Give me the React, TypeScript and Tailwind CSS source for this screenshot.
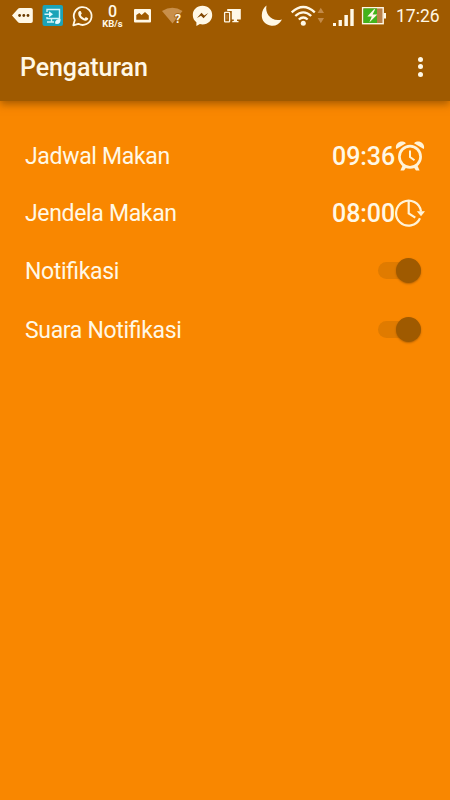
import { useState } from 'react';
import type { ReactNode } from 'react';

// Every notification icon sits in a 30x32 slot
function Slot({ children }: { children: ReactNode }) {
  return (
    <svg width="30" height="32" viewBox="0 0 30 32" fill="none" className="shrink-0">
      {children}
    </svg>
  );
}

function NotificationIcons() {
  return (
    <div className="flex">
      {/* message tag */}
      <Slot>
        <path d="M4 15.5 9.6 9.2Q10.6 8 12 8H23Q24.8 8 24.8 9.8V21.2Q24.8 23 23 23H12Q10.6 23 9.6 21.8Z" fill="#fff8e6" />
        <circle cx="11.6" cy="15.5" r="1.4" fill="#6b3c00" />
        <circle cx="15.8" cy="15.5" r="1.4" fill="#6b3c00" />
        <circle cx="20" cy="15.5" r="1.4" fill="#6b3c00" />
      </Slot>
      {/* screen sharing */}
      <Slot>
        <rect x="4.5" y="5" width="20.5" height="21" rx="2" fill="#1ba3b8" />
        <path d="M9 12V9.5H21.5V18.5H9V17M6.5 14.3H12M9 22H16M13.5 18.5V22" stroke="#d2f3f8" strokeWidth="1.4" />
        <path d="M11 11.3 15 14.3 11 17.3Z" fill="#e6fbff" />
        <path d="M17 23.5Q16.8 19.2 22.5 19Q23 24 18.8 24Z" fill="#e6fbff" />
      </Slot>
      {/* whatsapp */}
      <Slot>
        <path d="M5.3 25.3 6.8 20.1A8.9 8.9 0 1 1 10.4 23.8Z" stroke="#fff8e6" strokeWidth="1.8" strokeLinejoin="round" />
        <path d="M10.3 12.5C10.7 11 12 10.6 12.8 11.2L13.8 13.6 12.8 15C13.6 16.7 14.8 17.8 16.6 18.4L17.8 17.1 20.2 18.3C20.3 20.3 18.5 21 17 20.7 13.2 20 9.6 16 10.3 12.5Z" fill="#fff8e6" />
      </Slot>
      {/* network speed */}
      <div className="flex w-[30px] flex-col items-center pt-[3px] pr-px text-[#fff8e6]">
        <span className="h-[15px] text-[16px] leading-[17px] font-medium">0</span>
        <span className="h-[10px] text-[9.5px] leading-[11px] font-bold">KB/s</span>
      </div>
      {/* gallery */}
      <Slot>
        <rect x="6" y="9" width="17" height="13.5" rx="1" fill="#fff8e6" />
        <path d="M8.3 19.8V15L11.3 13 13.6 15 17 12 20.8 15.5V19.8Z" fill="#9f5a00" />
      </Slot>
      {/* unknown wifi */}
      <Slot>
        <path d="M4 11Q14.5 4.5 24.5 11L14.5 23.5Z" fill="#c88f4a" />
        <text x="16.8" y="22.5" fontSize="12.5" fontWeight="700" fill="#fff8e6" stroke="#9f5a00" strokeWidth="1.6" paintOrder="stroke">?</text>
      </Slot>
      {/* messenger */}
      <Slot>
        <path d="M14.5 5.8C8.8 5.8 4.8 9.8 4.8 15 4.8 18 6.1 20.6 8.4 22.3V26L11.9 24C12.8 24.3 13.6 24.4 14.5 24.4 20.2 24.4 24.2 20.2 24.2 15S20.2 5.8 14.5 5.8Z" fill="#fff8e6" />
        <path d="M9 18 13.5 12.7 16.2 15.4 20.3 13 15.6 18.3 13 15.7Z" fill="#804600" />
      </Slot>
      {/* devices */}
      <Slot>
        <path d="M9.2 9H22.8V19.5H19V21H20.5V22.3H14.3V21H15.8V19.5H13.8V11H9.2Z" fill="#fff8e6" />
        <rect x="6.6" y="12.3" width="5" height="9.6" rx=".7" stroke="#fff8e6" strokeWidth="1.3" />
        <path d="M8 14.5H10.2V19.5H8Z" fill="#b37427" />
      </Slot>
    </div>
  );
}

function SystemIcons() {
  return (
    <svg width="138" height="32" viewBox="250 0 138 32" fill="none" className="ml-0.5 shrink-0">
      {/* do not disturb */}
      <path d="M266.5 5.5C264.5 14 272 22.5 282 19.4 279.5 24 275.5 26.2 271.5 25.7 265.5 25.2 261.5 20.7 261.8 15 262 11 263.7 7.5 266.5 5.5Z" fill="#fff8e6" />
      {/* wifi */}
      <g stroke="#fff8e6" strokeWidth="2.3">
        <path d="M291.7 12.3Q303.3 1.7 314.8 12.3" />
        <path d="M295.3 16Q303.3 8.7 311.2 16" />
        <path d="M298.8 19.5Q303.3 15.6 307.7 19.5" />
      </g>
      <circle cx="303.3" cy="23.3" r="2.5" fill="#fff8e6" />
      <path d="M317.6 13 320.8 7.8 324 13ZM317.6 18 320.8 23.2 324 18Z" fill="#c38a48" />
      {/* signal */}
      <path d="M333 23h3v3h-3zM338.6 20h3.3v6h-3.3zM344.4 15h3.5v11h-3.5zM350.3 9h3.4v17h-3.4z" fill="#fff8e6" />
      {/* battery */}
      <rect x="362.6" y="7.7" width="20.6" height="16" fill="#b98048" stroke="#fff8e6" strokeWidth="1.4" />
      <path d="M363.4 8.4H377V23H363.4Z" fill="#43b41c" />
      <path d="M384 13h2v5.5h-2z" fill="#fff8e6" />
      <path d="M374 9.3 367.3 16.6H371.8L369.3 22.5 377.3 14.6H372.6L375.2 9.3Z" fill="#fff8e6" />
    </svg>
  );
}

function AlarmIcon() {
  return (
    <svg width="30" height="32" viewBox="0 1 30 32" fill="none" stroke="#fff3d8">
      <circle cx="15" cy="16.8" r="10.6" strokeWidth="2.7" />
      <path d="M1.3 9C-.8 4.5 5.5-1.2 11 3.2ZM19 3.2C24.5-1.2 30.8 4.5 28.7 9Z" fill="#fff3d8" stroke="none" />
      <path d="M7.6 25.5 5.4 30.6H9L11.3 27.3ZM22.4 25.5 24.6 30.6H21L18.7 27.3Z" fill="#fff3d8" stroke="none" />
      <path d="M15 10.5V17.1L19.5 20.3" strokeWidth="2" />
    </svg>
  );
}

function ClockIcon() {
  return (
    <svg width="30" height="32" viewBox="0 0 30 32" fill="none" stroke="#fff3d8">
      <path d="M26 13.5A12.5 12.5 0 1 0 25 20.3" strokeWidth="2.2" />
      <path d="M21.8 13.3H30L26 18.2Z" fill="#fff3d8" stroke="none" />
      <path d="M13.7 3V15.3L20.3 19.6" strokeWidth="2.2" />
    </svg>
  );
}

function Toggle({ label }: { label: string }) {
  const [on, setOn] = useState(true);
  return (
    <button
      role="switch"
      aria-checked={on}
      aria-label={label}
      onClick={() => setOn(!on)}
      className={`mr-1 mb-[3px] flex h-[17px] w-[43px] items-center rounded-full bg-[#e07b00] ${on ? 'justify-end' : 'justify-start'}`}
    >
      <span className="size-[25px] rounded-full bg-[#9f5a00] shadow-[0_1px_2px_rgba(90,50,0,0.4)]" />
    </button>
  );
}

const rows = [
  { label: 'Jadwal Makan', time: '09:36', icon: <AlarmIcon /> },
  { label: 'Jendela Makan', time: '08:00', icon: <ClockIcon /> },
  { label: 'Notifikasi' },
  { label: 'Suara Notifikasi' },
];

export default function App() {
  return (
    <div className="flex h-[800px] w-[450px] flex-col overflow-hidden bg-[#f98700] font-['Roboto',sans-serif] text-[#fff8e6]">
      <header className="h-[101px] shrink-0 bg-[#9f5a00] shadow-[0_3px_8px_rgba(80,45,0,0.5)]">
        <div className="flex h-8 pl-2">
          <NotificationIcons />
          <SystemIcons />
          <span className="ml-2 text-[17.5px] leading-8">17:26</span>
        </div>
        <div className="flex h-[69px] items-center justify-between pr-[27px] pl-5">
          <h1 className="pt-0.5 text-[25px] font-medium tracking-[-0.1px]">Pengaturan</h1>
          <button aria-label="Menu" className="flex flex-col gap-[2.5px]">
            <span className="size-[5px] rounded-full bg-[#fff8e6]" />
            <span className="size-[5px] rounded-full bg-[#fff8e6]" />
            <span className="size-[5px] rounded-full bg-[#fff8e6]" />
          </button>
        </div>
      </header>

      <main className="flex flex-col pt-[26px] pr-[25px] pl-[25px]">
        {rows.map((row) => (
          <div key={row.label} className="flex h-[58px] items-center justify-between first:pt-px last:h-[60px]">
            <span className="pt-px text-[23px] tracking-[-0.33px] [font-feature-settings:'liga'_1]">{row.label}</span>
            {row.time ? (
              <div className="flex items-center">
                <span className="text-[25px] font-medium tracking-[-0.1px]">{row.time}</span>
                {row.icon}
              </div>
            ) : (
              <Toggle label={row.label} />
            )}
          </div>
        ))}
      </main>
    </div>
  );
}
